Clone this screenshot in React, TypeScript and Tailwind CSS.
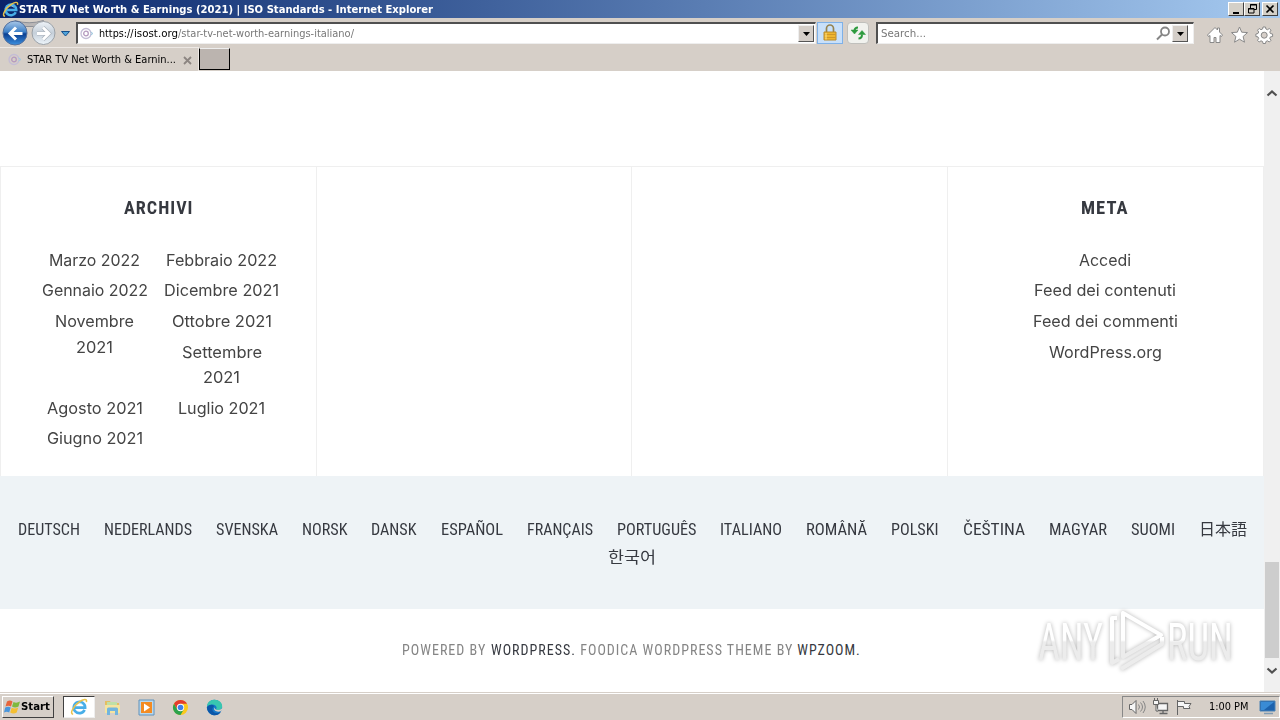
import { useLayoutEffect, useRef, useState } from "react";
import { clsx } from "clsx";

const LANGUAGES = [
  { label: "DEUTSCH", width: 62 },
  { label: "NEDERLANDS", width: 88 },
  { label: "SVENSKA", width: 62 },
  { label: "NORSK", width: 45.5 },
  { label: "DANSK", width: 45.5 },
  { label: "ESPAÑOL", width: 62 },
  { label: "FRANÇAIS", width: 66 },
  { label: "PORTUGUÊS", width: 79.5 },
  { label: "ITALIANO", width: 62 },
  { label: "ROMÂNĂ", width: 61 },
  { label: "POLSKI", width: 47.5 },
  { label: "ČEŠTINA", width: 62 },
  { label: "MAGYAR", width: 58 },
  { label: "SUOMI", width: 44 },
  { label: "日本語", width: 48 },
  { label: "한국어", width: 48 },
];

const ARCHIVES = [
  { label: "Marzo 2022", width: 91 },
  { label: "Febbraio 2022", width: 111 },
  { label: "Gennaio 2022", width: 106 },
  { label: "Dicembre 2021", width: 115 },
  { label: "Novembre", second: "2021", width: 79 },
  { label: "Ottobre 2021", width: 100 },
  { label: "Settembre", second: "2021", width: 80 },
  { label: "Agosto 2021", width: 96, clear: true },
  { label: "Luglio 2021", width: 87 },
  { label: "Giugno 2021", width: 96 },
];

const META = [
  { label: "Accedi", width: 52 },
  { label: "Feed dei contenuti", width: 142 },
  { label: "Feed dei commenti", width: 145 },
  { label: "WordPress.org", width: 113 },
];

const UI = "font-['Tahoma','DejaVu_Sans_Condensed','DejaVu_Sans',sans-serif]";
const COND = "font-['Roboto_Condensed','Roboto','Noto_Sans_CJK_JP','Noto_Sans_CJK_KR',sans-serif]";

// Squeezes a single line of text into a fixed width.
function Fit({ text, width, className }: { text: string; width: number; className?: string }) {
  const ref = useRef<HTMLSpanElement>(null);
  const [scale, setScale] = useState(1);

  useLayoutEffect(() => {
    const node = ref.current;
    if (!node) return;
    const previous = node.style.transform;
    node.style.transform = "none";
    const natural = node.getBoundingClientRect().width;
    node.style.transform = previous;
    if (natural > 0) setScale(width / natural);
  }, [text, width]);

  return (
    <span className={clsx("inline-block whitespace-pre text-left", className)} style={{ width }}>
      <span ref={ref} className="inline-block origin-left" style={{ transform: `scaleX(${scale})` }}>
        {text}
      </span>
    </span>
  );
}

function IeLogo({ size }: { size: number }) {
  return (
    <svg width={size} height={size} viewBox="0 0 20 20" fill="none" className="shrink-0">
      <path d="M16.200 13.200A6.300 6.300 0 1 1 16.800 10.600H5.200" stroke="#48aee8" strokeWidth="3" />
      <path d="M5 9.200A5.400 5.400 0 0 1 14 7.400" stroke="#a5e2fa" strokeWidth="1" />
      <path d="M3.500 18C-1 17.500 4 9 10 4.600 14.500 1.300 19.500 0 18.200 4.600" stroke="#e8c24a" strokeWidth="1.700" />
    </svg>
  );
}

function SiteIcon() {
  return (
    <svg width="14" height="14" viewBox="0 0 14 14" fill="none" className="shrink-0">
      <circle cx="6" cy="6.500" r="5" stroke="#c4bdd6" strokeWidth="1.300" />
      <circle cx="6" cy="6.500" r="2.300" stroke="#b59abf" strokeWidth="1.300" />
      <path d="M10.500 5 13 6.500 10.500 8" stroke="#9fcbe0" />
    </svg>
  );
}

function TitleBar() {
  const button =
    "flex h-[14px] w-4 items-center justify-center border border-t-white border-l-white border-r-[#404040] border-b-[#404040] bg-[#d4d0c8]";
  return (
    <header className="flex h-[18px] items-center bg-linear-to-r from-[#0a246a] to-[#a6caf0] pr-0.5 pl-[2px]">
      <IeLogo size={17} />
      <Fit
        text="STAR TV Net Worth & Earnings (2021) | ISO Standards - Internet Explorer"
        width={414}
        className={clsx(UI, "mt-px text-[11px] leading-[17px] font-bold text-white")}
      />
      <div className="ml-auto flex">
        <span className={button}>
          <svg width="12" height="12" viewBox="0 0 12 12"><path d="M3 9h6v2H3z" /></svg>
        </span>
        <span className={button}>
          <svg width="12" height="12" viewBox="0 0 12 12" fill="none" stroke="#000">
            <path d="M4.500 5V1.500h6v5H8M4 2h7M2.500 5.500h5.500v4.500H2.500zM2 6h6" />
          </svg>
        </span>
        <span className={clsx(button, "ml-0.5")}>
          <svg width="12" height="12" viewBox="0 0 12 12"><path d="m2.500 2.500 7 7m0-7-7 7" stroke="#000" strokeWidth="1.700" /></svg>
        </span>
      </div>
    </header>
  );
}

function NavButtons() {
  return (
    <svg width="74" height="29" viewBox="0 0 74 29" className="shrink-0">
      <defs>
        <linearGradient id="back" x1="0" y1="0" x2="0" y2="1">
          <stop offset="0" stopColor="#a9c8e8" />
          <stop offset="0.46" stopColor="#3c7fc7" />
          <stop offset="0.54" stopColor="#0b3f91" />
          <stop offset="1" stopColor="#3d91e0" />
        </linearGradient>
        <linearGradient id="forward" x1="0" y1="0" x2="0" y2="1">
          <stop offset="0" stopColor="#eef3f8" />
          <stop offset="0.5" stopColor="#c5cfd9" />
          <stop offset="1" stopColor="#edf5fb" />
        </linearGradient>
      </defs>
      <path d="M15 2.500q14 4.500 28.500 0v6H15z" fill="#b9b6b6" stroke="#8d9097" />
      <circle cx="15" cy="15" r="12" fill="url(#back)" stroke="#536f9c" />
      <circle cx="43.500" cy="15" r="11.500" fill="url(#forward)" stroke="#9ba1a7" />
      <path d="M22.500 15.500H10m6-6-6 6 6 6" stroke="#fff" strokeWidth="3" fill="none" />
      <path d="M37 15.500h12m-6-6 6 6-6 6" stroke="#a8b0ba" strokeWidth="4" fill="none" />
      <path d="M37 15.500h12m-6-6 6 6-6 6" stroke="#fff" strokeWidth="2.800" fill="none" />
      <path d="M61.500 13.500h8L65.500 18z" fill="#4fa4db" stroke="#15508c" />
    </svg>
  );
}

function DropButton() {
  return (
    <span className="flex h-[17px] w-4 shrink-0 items-center justify-center border border-t-[#eee] border-r-[#555] border-b-[#555] border-l-[#eee] bg-[#d4cec8]">
      <svg width="7" height="4" viewBox="0 0 7 4"><path d="M0 0h7L3.500 4z" /></svg>
    </span>
  );
}

function Toolbar() {
  const field = "flex h-[22px] items-center border-t-2 border-r border-b border-l-2 border-t-[#505050] border-r-[#eee] border-b-[#eee] border-l-[#505050] bg-white";
  return (
    <div className="flex h-[29px] items-start">
      <NavButtons />
      <div className={clsx(field, "mt-1 ml-0.5 w-[740px] pl-[2px]")}>
        <SiteIcon />
        <Fit text="https://" width={34.500} className={clsx(UI, "mt-0.5 ml-[5px] text-[11px]")} />
        <Fit text="isost.org" width={44} className={clsx(UI, "mt-0.5 text-[11px]")} />
        <Fit text="/star-tv-net-worth-earnings-italiano/" width={176} className={clsx(UI, "mt-0.5 text-[11px] text-[#777]")} />
        <span className="mr-px ml-auto flex"><DropButton /></span>
      </div>
      <span className="mt-1 ml-px flex h-[22px] w-[26px] items-center justify-center border border-[#7eb1e8] bg-[#c8e0fa]">
        <svg width="16" height="18" viewBox="0 0 16 18">
          <path d="M4.500 8V4.500a3.500 3.500 0 0 1 7 0V8" fill="none" stroke="#958351" strokeWidth="1.700" />
          <path d="M2 8h12v8H2z" fill="#efb62f" stroke="#b98a2c" />
          <path d="M2.500 10.500h11M2.500 13.500h11" stroke="#cf9828" />
          <path d="M4 9v6.500" stroke="#ffe38a" />
        </svg>
      </span>
      <span className="mt-1 ml-1 flex h-[22px] w-[22px] items-center justify-center rounded-sm border border-[#c0c0bc] bg-[#f1f2ee]">
        <svg width="16" height="16" viewBox="0 0 16 16" fill="none" stroke="#2c9a3d" strokeWidth="2">
          <path d="M8 2.500C5.500 2.500 4.500 4 4.500 6" />
          <path d="m1 5 3.500 4L8 5z" fill="#2c9a3d" strokeWidth=".5" />
          <path d="M8.500 13.500c2.500 0 3.500-1.500 3.500-4" />
          <path d="m8.500 9.500 3.500-4 3.500 4z" fill="#2c9a3d" strokeWidth=".5" />
        </svg>
      </span>
      <div className={clsx(field, "mt-1 ml-[7px] w-[318px] pl-[3px]")}>
        <Fit text="Search..." width={45} className={clsx(UI, "mt-0.5 text-[11px] text-[#777]")} />
        <svg width="15" height="15" viewBox="0 0 15 15" fill="none" stroke="#858585" className="ml-auto">
          <circle cx="9" cy="5.500" r="4" strokeWidth="1.800" />
          <path d="m6 8.500-5 5" strokeWidth="2" />
        </svg>
        <span className="mr-[5px] ml-px flex"><DropButton /></span>
      </div>
      <svg width="70" height="20" viewBox="0 0 70 20" fill="#fff" stroke="#898989" strokeWidth="1" className="mt-[7px] ml-[12px]">
        <path d="M1.500 10 9 2.500l2.500 2.500V3h2v4l3 3-1 1.500-1.500-1v7h-4v-5H8v5H4v-7l-1.500 1z" />
        <path d="m33.500 2 2.200 5.200 5.800.4-4.400 3.900 1.400 5.700-5-3-5 3 1.400-5.700-4.400-3.900 5.800-.4z" />
        <path d="M57 2h2.500l.4 2 1.600.7 1.800-1.200L65 5.200 63.800 7l.6 1.500 2.200.5v2.500l-2.200.4-.6 1.600 1.200 1.800-1.700 1.700-1.800-1.200-1.600.7-.4 2H57l-.4-2-1.600-.7-1.800 1.200-1.700-1.700 1.200-1.800-.7-1.600-2.100-.4V9l2.100-.5.7-1.500-1.200-1.800 1.700-1.700L55 4.700l1.600-.7z" />
        <circle cx="58.200" cy="10.200" r="3" fill="#d6cfc9" />
      </svg>
    </div>
  );
}

function TabRow() {
  return (
    <div className="flex h-6 items-start">
      <div className="flex h-6 w-[199px] items-center border-t border-r border-t-[#eee9e5] border-r-[#eee9e5] pl-2">
        <SiteIcon />
        <Fit text="STAR TV Net Worth & Earnin..." width={149} className={clsx(UI, "mt-0.5 ml-[5px] text-[11px]")} />
        <svg width="9" height="9" viewBox="0 0 9 9" className="mt-px ml-[7px]">
          <path d="m1 1 7 7m0-7-7 7" stroke="#8c8581" strokeWidth="1.800" />
        </svg>
      </div>
      <div className="mt-px h-[22px] w-[31px] border border-t-[#eee] border-r-black border-b-black border-l-black bg-[#bbb4af]" />
    </div>
  );
}

function WidgetTitle({ text, width }: { text: string; width: number }) {
  return (
    <h3 className={clsx(COND, "h-[26px] text-center text-[18px] leading-[26px] font-bold tracking-[1px] text-[#363940]")}>
      <Fit text={text} width={width} />
    </h3>
  );
}

function Widgets() {
  return (
    <section className="mt-[95px] grid h-[310px] grid-cols-[316px_315px_316px_316px] border-t border-l border-[#efefef] text-base leading-[25.6px] text-[#444] font-['Inter',sans-serif]">
      <div className="border-r border-[#efefef] px-[30px] pt-7">
        <WidgetTitle text="ARCHIVI" width={69.500} />
        <ul className="mt-[26.8px] text-center">
          {ARCHIVES.map((item) => (
            <li key={item.label} className={clsx("float-left w-[127px] pb-[5px]", item.clear && "clear-both")}>
              <Fit text={item.label} width={item.width} className="align-top" />
              {item.second && (
                <>
                  <br />
                  <Fit text={item.second} width={37} className="align-top" />
                </>
              )}
            </li>
          ))}
        </ul>
      </div>
      <div className="border-r border-[#efefef]" />
      <div className="border-r border-[#efefef]" />
      <div className="border-r border-[#efefef] pt-7 pr-px">
        <WidgetTitle text="META" width={47.500} />
        <ul className="mt-[26.8px] text-center">
          {META.map((item) => (
            <li key={item.label} className="pb-[5px]">
              <Fit text={item.label} width={item.width} className="align-top" />
            </li>
          ))}
        </ul>
      </div>
    </section>
  );
}

function Credits() {
  return (
    <p className={clsx(COND, "flex justify-center pt-[31px] pr-px text-sm leading-5 tracking-[1px] text-[#858585]")}>
      <Fit text="POWERED BY " width={88.500} />
      <Fit text="WORDPRESS." width={85} className="text-[#363940]" />
      <Fit text=" FOODICA WORDPRESS THEME BY " width={221.500} />
      <Fit text="WPZOOM." width={63.500} className="text-[#363940]" />
    </p>
  );
}

function Page() {
  return (
    <main className="w-[1264px] overflow-hidden bg-white">
      <Widgets />
      <nav className={clsx(COND, "flex h-[133px] flex-wrap content-start justify-center gap-x-[24px] bg-[#eef3f6] pt-10 text-base leading-7 text-[#363940]")}>
        {LANGUAGES.map((language) => (
          <Fit key={language.label} text={language.label} width={language.width} className="h-7" />
        ))}
      </nav>
      <Credits />
    </main>
  );
}

function ScrollBar() {
  return (
    <div className="flex w-4 flex-col items-center bg-[#f0f0f0]">
      <svg width="12" height="8" viewBox="0 0 12 8" className="mt-[18px]">
        <path d="m1.500 6.500 4.500-4 4.500 4" fill="none" stroke="#505050" strokeWidth="2.200" />
      </svg>
      <div className="mt-[465px] h-24 w-3.5 bg-[#cdcdcd]" />
      <svg width="12" height="8" viewBox="0 0 12 8" className="mt-[9px]">
        <path d="m1.500 1.500 4.500 4 4.500-4" fill="none" stroke="#505050" strokeWidth="2.200" />
      </svg>
    </div>
  );
}

function Watermark() {
  return (
    <svg width="230" height="80" viewBox="0 0 230 80" className="absolute top-[605px] left-[1030px] overflow-visible drop-shadow-[0_0_2px_#b4b4b4]">
      <defs>
        <linearGradient id="mark" x1="0" y1="0" x2="0" y2="70" gradientUnits="userSpaceOnUse">
          <stop offset="0.5" stopColor="#fff" />
          <stop offset="0.53" stopColor="#ececec" />
        </linearGradient>
      </defs>
      <g fill="url(#mark)" fontFamily="'Roboto Condensed', Roboto, sans-serif" fontSize="51">
        <text x="8" y="54.500" textLength="65" lengthAdjust="spacingAndGlyphs">ANY</text>
        <text x="137" y="54.500" textLength="66" lengthAdjust="spacingAndGlyphs">RUN</text>
      </g>
      <g fill="none" stroke="url(#mark)" strokeWidth="4" strokeLinejoin="round">
        <path d="M93 8v44l38-22z" />
        <path d="M87 13h-5v45l7-4M91 64l41-25v-7" />
      </g>
    </svg>
  );
}

function ExplorerIcon() {
  return (
    <svg width="17" height="17" viewBox="0 0 17 17">
      <path d="M1 2h5l1 2h8v8H1z" fill="#e4be62" />
      <path d="M3 3h10v7H3z" fill="#bfe0a7" />
      <path d="M1 6h15v8H1z" fill="#f5e49f" />
      <path d="M3 16V10q0-1.500 1.500-1.500h8q1.500 0 1.500 1.500v6h-3v-4H6v4z" fill="#72b5de" />
    </svg>
  );
}

function ChromeIcon() {
  return (
    <svg width="17" height="17" viewBox="0 0 17 17">
      <circle cx="8.500" cy="8.500" r="7.500" fill="#fbc91b" />
      <path d="M2 4.750a7.500 7.500 0 0 1 13 0H8.500v3.750L5.300 10.400z" fill="#e33b2e" />
      <path d="M2 4.750A7.500 7.500 0 0 0 8.500 16l3.250-5.600-3.250 1.850-3.200-1.850z" fill="#2ba24c" />
      <circle cx="8.500" cy="8.500" r="3.700" fill="#fff" />
      <circle cx="8.500" cy="8.500" r="2.800" fill="#3f7fe8" />
    </svg>
  );
}

function EdgeIcon() {
  return (
    <svg width="17" height="17" viewBox="0 0 17 17">
      <circle cx="8.500" cy="8.500" r="7.700" fill="#1578c8" />
      <path d="M1 8C1 3 4.500.8 8.500.8c4.700 0 7.700 3.200 7.700 6.400 0 2.700-2 3.800-4 3.800-2.500 0-2.200-1-1.600-2C11 6 4.500 3.500 1 8z" fill="#38c6b0" />
      <path d="M1 8c3-3.500 7-2.500 7-.5-3 2-1.500 6 2 6.500 2 .3 4-.5 5-1.500-2 3.800-6 4.500-9 3.200C2.500 14.300.8 11 1 8z" fill="#0c57a8" />
      <path d="M8.200 8.500c-1 3.500 3.300 5.200 7 3.500l1.800-2v-2c-1 2-3 3-5 3-2.500 0-3-1-3.800-2.500z" fill="#d6cfc8" />
    </svg>
  );
}

function Taskbar() {
  return (
    <footer className="flex h-7 items-center border-t border-[#d6cfc8] bg-[#d6cfc8] shadow-[inset_0_1px_0_#fff]">
      <div className="mt-px ml-0.5 flex h-[22px] w-[52px] items-center border border-t-white border-r-[#404040] border-b-[#404040] border-l-white pl-px">
        <svg width="17" height="17" viewBox="0 0 17 17">
          <path d="M3 2.500q3-2 5.500 0L7 7.500q-2.500-1.500-5.500 0z" fill="#e7653b" />
          <path d="M9.500 3q3 1.500 6.500-.5l-1.500 5q-3.500 2-6.500 0z" fill="#7fb93d" />
          <path d="M1.200 8.500q3-1.500 5.500 0L5.200 13.500q-2.500-1.500-5.200 0z" fill="#4a96dc" />
          <path d="M7.700 8.700q3 1.500 6.500-.2l-1.500 5q-3.300 2-6.500-.1z" fill="#f4bf32" />
        </svg>
        <Fit text="Start" width={29} className={clsx(UI, "text-[11px] font-bold")} />
      </div>
      <div className="mt-px ml-[9px] flex h-[22px] w-8 items-center justify-center border border-t-[#404040] border-r-[#eee] border-b-[#eee] border-l-[#404040] bg-white">
        <IeLogo size={18} />
      </div>
      <div className="mt-px ml-[9px] flex items-center gap-[17px]">
        <ExplorerIcon />
        <svg width="17" height="17" viewBox="0 0 17 17">
          <path d="M1 1h15v15H1z" fill="#b9d8ed" stroke="#6192bc" />
          <path d="M3 3h11v11H3z" fill="#f38b22" />
          <path d="m6 4.500 6 4-6 4z" fill="#fff" />
        </svg>
        <ChromeIcon />
        <EdgeIcon />
      </div>
      <div className="mt-px ml-auto flex h-[22px] w-[158px] items-center border border-t-[#888] border-r-white border-b-white border-l-[#888] pl-[5px]">
        <svg width="66" height="18" viewBox="0 0 66 18" fill="#f6f6f6" stroke="#656565">
          <path d="M1.500 6.500H4l4-4v13l-4-4H1.500z" />
          <path d="M10.500 6.500q2 2.500 0 5M12.500 4.500q4 4.500 0 9M15 3q4.500 6 0 12" fill="none" stroke="#858585" />
          <path d="M29.500 5.500h10v7h-10zM31.500 15.500h8M35 13v2" strokeWidth="1.300" />
          <path d="M25.500 2.500h5v4h-5zM26.500 0v3M29.500 0v3M28 7v6h2" />
          <path d="M49.500 2v15M49.500 3.500h7v2h6.500l-2 3 1 2h-6.500v-2h-6" />
        </svg>
        <Fit text="1:00 PM" width={39.500} className={clsx(UI, "ml-[15px] text-[11px]")} />
        <svg width="17" height="16" viewBox="0 0 17 16" className="ml-[10px]">
          <path d="M1 2h15v10H1z" fill="#1d62ad" stroke="#4d83b5" />
          <path d="m2 3 13 0-10 8H2z" fill="#3a8bd5" />
          <path d="M5 14.500h9" stroke="#819bb2" strokeWidth="1.500" />
        </svg>
      </div>
    </footer>
  );
}

export default function App() {
  return (
    <div className="relative flex h-[720px] w-[1280px] flex-col overflow-hidden bg-[#d6cfc8]">
      <TitleBar />
      <Toolbar />
      <TabRow />
      <div className="flex h-[621px]">
        <Page />
        <ScrollBar />
      </div>
      <Taskbar />
      <Watermark />
    </div>
  );
}
